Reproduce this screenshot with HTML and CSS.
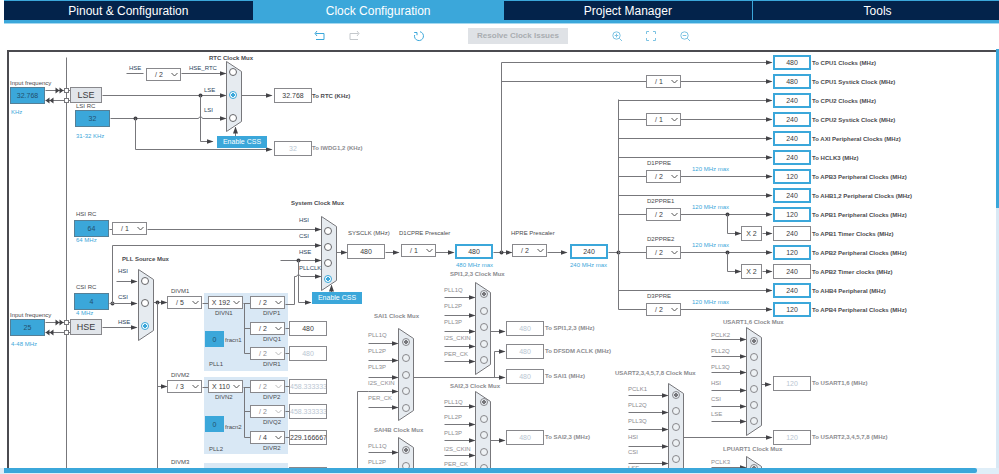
FILE: index.html
```html
<!DOCTYPE html>
<html lang="en">
<head>
<meta charset="utf-8">
<title>Clock Configuration</title>
<link rel="stylesheet" href="styles.css">
</head>
<body>
<nav class="tabs">
  <a class="tab" href="#pinout">Pinout &amp; Configuration</a>
  <a class="tab tab-active" href="#clock" aria-current="page">Clock Configuration</a>
  <a class="tab" href="#project">Project Manager</a>
  <a class="tab" href="#tools">Tools</a>
</nav>
<div class="toolbar">
  <div class="tool-group">
    <button class="tool" aria-label="Undo"><svg viewBox="0 0 12 12"><path d="M3 1 1 3.500 3 6M1.500 3.500H10V9.500H2"/></svg></button>
    <button class="tool" aria-label="Redo" disabled><svg viewBox="0 0 12 12"><path d="M9 1 11 3.500 9 6M10.500 3.500H2V9.500H10"/></svg></button>
  </div>
  <button class="tool" aria-label="Refresh"><svg viewBox="0 0 12 12"><path d="M7 1.700A4.500 4.500 0 1 1 1.600 5M1.200 2.500H4V5.200"/></svg></button>
  <button class="resolve" disabled>Resolve Clock Issues</button>
  <div class="tool-group">
    <button class="tool thin" aria-label="Zoom in"><svg viewBox="0 0 12 12"><circle cx="5.500" cy="5.500" r="3.700"/><path d="M8.300 8.300 11 11M3.700 5.500H7.300M5.500 3.700V7.300"/></svg></button>
    <button class="tool thin" aria-label="Fit"><svg viewBox="0 0 12 12"><path d="M1.500 4V1.500H4M8 1.500H10.500V4M10.500 8V10.500H8M4 10.500H1.500V8"/></svg></button>
    <button class="tool thin" aria-label="Zoom out"><svg viewBox="0 0 12 12"><circle cx="5.500" cy="5.500" r="3.700"/><path d="M8.300 8.300 11 11M3.700 5.500H7.300"/></svg></button>
  </div>
</div>
<main class="workspace">
  <div class="canvas" id="canvas">
    <svg class="wires" id="wires">
      <defs>
        <marker id="arrow" markerUnits="userSpaceOnUse" markerWidth="7" markerHeight="6" refX="6" refY="3" orient="auto"><path class="head" d="M0 0.500 7 3 0 5.500Z"/></marker>
      </defs>
    </svg>
  </div>
  <div class="vscroll"><div class="vthumb"></div></div>
</main>
<div class="hscroll"><div class="hthumb"></div></div>
<script src="script.js"></script>
</body>
</html>
```
FILE: styles.css
```css
* { box-sizing: border-box; }

body {
  margin: 0;
  height: 100vh;
  display: flex;
  flex-direction: column;
  overflow: hidden;
  background: #fff;
  color: #3c3c40;
  font: 6px/8px "Liberation Sans", Arial, sans-serif;
}

button, input, select {
  margin: 0;
  padding: 0;
  font: inherit;
  color: inherit;
  appearance: none;
  border-radius: 0;
}

/* Tab strip */
.tabs {
  display: grid;
  grid-template-columns: repeat(4, 1fr);
  gap: 1px;
  margin: 0 -3px 0 4px;
  padding: 1px 0 3px;
  background: #3ba7da;
  border-bottom: 1px solid #a5d8ef;
}
.tab {
  height: 19px;
  background: #03234b;
  color: #fff;
  font-size: 12px;
  line-height: 20px;
  text-align: center;
  text-decoration: none;
}
.tab-active { background: #3ba7da; }

/* Toolbar */
.toolbar {
  height: 25px;
  display: flex;
  align-items: center;
  justify-content: center;
  gap: 43px;
  padding: 0 0 2px 6px;
}
.tool-group { display: flex; gap: 22px; }
.toolbar > .tool { margin: 0 0 0 10px; }
.tool {
  width: 12px;
  height: 12px;
  border: 0;
  background: none;
  color: #3ba7da;
}
.tool:disabled { color: #c4c8cc; }
.tool svg { display: block; width: 12px; height: 12px; }
.tool path, .tool circle { fill: none; stroke: currentColor; stroke-width: 1; }
.thin { color: #7cc3e3; }
.resolve {
  width: 100px;
  height: 16px;
  border: 0;
  background: #dfe2e6;
  color: #a9adb1;
  font-size: 8px;
  font-weight: bold;
}

/* Diagram area */
.workspace { flex: 1; min-height: 0; display: flex; padding-left: 7px; }
.canvas {
  position: relative;
  flex: 1;
  margin-top: 1px;
  overflow: hidden;
  border: solid #4b4b50;
  border-width: 2px 0 0 2px;
}
.vscroll { width: 3px; background: #d9e9f5; }
.vthumb { height: 38%; background: #3ba7da; }
.hscroll { height: 6px; padding: 0 22px 1px 4px; background: #dfeef8; }
.hthumb { height: 5px; background: #3ba7da; border-radius: 0 2px 2px 0; }

.wires { position: absolute; left: 0; top: 0; width: 100%; height: 100%; }
.wire { fill: none; stroke: #77777b; }
.head, .dot { fill: #424246; }
.mux { fill: #e6ebf0; stroke: #77777b; }
.pin { fill: #fff; stroke: #77777b; }
.pll { fill: #d9e8f5; }

.node { position: absolute; }
.text { white-space: nowrap; color: #4a4a4e; }
.name { color: #2d4560; }
.strong { font-weight: bold; }
.dim { color: #8b8b8f; }
.blue { color: #3ba7da; }

.box {
  width: 38px;
  height: 15px;
  border: 1px solid #88888c;
  background: #fff;
  font-size: 7px;
  text-align: center;
}
.box:disabled { color: #b9c6d2; }
.limit { border: 2px solid #3ba7da; }
.source { width: 35px; height: 17px; background: #3ba7da; border-color: #557f96; color: #23506e; }
.fraction { width: 19px; height: 16px; background: #3ba7da; border-color: #3ba7da; color: #23506e; }
.times { width: 21px; }
.osc {
  width: 32px;
  height: 16px;
  border: 1px solid #88888c;
  background: #e1e5ea;
  font-size: 9px;
  line-height: 15px;
  text-align: center;
}
.css-button { width: 50px; height: 12px; border: 0; background: #3ba7da; color: #fff; font-size: 7px; }

.picker { width: 35px; height: 13px; }
.picker select {
  display: block;
  width: 100%;
  height: 100%;
  padding-right: 9px;
  border: 1px solid #88888c;
  background: #fff;
  font-size: 7px;
  text-align: center;
}
.picker svg { position: absolute; right: 3px; top: 4px; width: 7px; height: 5px; fill: none; stroke: #555; pointer-events: none; }
.picker-off select { color: #8b8b8f; opacity: 1; }
.picker-off svg { stroke: #bbb; }

.radio {
  width: 8px;
  height: 8px;
  border: 1px solid #66666a;
  border-radius: 50%;
  background: #fff;
}
.radio:checked {
  border-color: #3ba7da;
  background: radial-gradient(circle, #3ba7da 0 2px, #fff 2px);
}
.radio:disabled { border-color: #88888c; background: #edf1f4; }
.radio:disabled:checked { background: radial-gradient(circle, #77777b 0 2px, #e6ebf0 2px); }
```
FILE: script.js
```js
// Diagram coordinates of the canvas corner.
const LEFT = 9, TOP = 52;
const canvas = document.getElementById('canvas');
const NS = 'http://www.w3.org/2000/svg';
const layer = document.createElementNS(NS, 'g');
layer.setAttribute('transform', `translate(${0.5 - LEFT} ${0.5 - TOP})`);
document.getElementById('wires').append(layer);
let serial = 0;

function shape(tag, cls, attrs) {
  const el = document.createElementNS(NS, tag);
  el.setAttribute('class', cls);
  for (const k in attrs) el.setAttribute(k, attrs[k]);
  layer.append(el);
}
function node(tag, cls, x, y, props = {}) {
  const el = document.createElement(tag);
  el.className = 'node ' + cls;
  Object.assign(el, props);
  el.style.left = x - LEFT + 'px';
  el.style.top = y - TOP + 'px';
  canvas.append(el);
  return el;
}
const wire = d => shape('path', 'wire', { d });
const arrow = d => shape('path', 'wire', { d, 'marker-end': 'url(#arrow)' });
const dot = (cx, cy) => shape('circle', 'dot', { cx, cy, r: 2 });
const pll = (y, height) => shape('rect', 'pll', { x: 203.5, y: y - 0.5, width: 84, height });
// y is the middle of the line of text
const text = (cls, x, y, textContent, tag = 'span') => node(tag, 'text ' + cls, x, y - 4, { textContent });
function label(cls, x, y, caption, target) {
  text(cls, x, y, caption, 'label').htmlFor = target.id;
}
function box(cls, x, y, value, off = false) {
  return node('input', 'box ' + cls, x, y, { id: 'f' + serial++, value, disabled: off });
}
function picker(x, y, value, off = false) {
  const wrap = node('div', 'picker' + (off ? ' picker-off' : ''), x, y);
  const id = 's' + serial++;
  wrap.innerHTML = `<select id="${id}" aria-label="Factor"${off ? ' disabled' : ''}><option>${value}</option></select>` +
    '<svg viewBox="0 0 7 5"><path d="M0.500 1 3.500 4 6.500 1"/></svg>';
  return { id };
}
function mux(x, y1, y2, rx, radios, checked, off) {
  shape('path', 'mux', { d: `M${x} ${y1}L${x + 15} ${y1 + 10}V${y2 - 10}L${x} ${y2}Z` });
  const name = 'm' + serial++;
  radios.forEach((y, i) => node('input', 'radio', rx - 4, y - 4,
    { type: 'radio', name, checked: i === checked, disabled: off, ariaLabel: 'Source ' + (i + 1) }));
}
// Inputs of a mux: each has a name and an arrow below it
function inputs(x, end, names, nameYs, wireYs) {
  names.forEach((n, i) => {
    text('dim', x, nameYs[i], n);
    if (wireYs[i]) arrow(`M${x} ${wireYs[i]}H${end}`);
  });
}

pll(293, 78); pll(377, 77); pll(463, 60);
wire('M66 57V480');

// External oscillators
[[87, 'LSE', '32.768', 'KHz'], [319, 'HSE', '25', '4-48 MHz']].forEach(([y, name, value, unit]) => {
  const f = box('source', 10, y, value);
  label('', 10, y - 4, 'Input frequency', f);
  text('blue', 11, y + 25, unit);
  wire(`M45 ${y + 3}H64M45 ${y + 13}H64M68 ${y + 3}H70M68 ${y + 13}H70`);
  shape('path', 'head', { d: `M55 ${y}l4 3-4 3zM59 ${y}l4 3-4 3zM49 ${y + 10}l-4 3 4 3zM53 ${y + 10}l-4 3 4 3z` });
  [1, 11].forEach(d => shape('rect', 'pin', { x: 64, y: y + d, width: 4, height: 4 }));
  node('div', 'osc', 70, y, { textContent: name });
});

// Internal oscillators
[[75, 110, 106, 136, 'LSI RC', '32', '31-32 KHz'], [74, 220, 214, 240, 'HSI RC', '64', '64 MHz'],
 [74, 293, 287, 313, 'CSI RC', '4', '4 MHz']].forEach(([x, y, ly, uy, name, value, unit]) => {
  label('', 76, ly, name, box('source', x, y, value));
  text('blue', 76, uy, unit);
});

// RTC
text('name', 129, 68, 'HSE'); wire('M126 73H143'); picker(146, 68, '/ 2');
text('name', 189, 68, 'HSE_RTC'); arrow('M181 73H225');
text('name', 204, 90, 'LSE'); arrow('M102 95H225'); dot(200, 95);
text('name', 204, 110, 'LSI'); arrow('M110 118H198Q200 114 202 118H225'); dot(135, 118);
arrow('M200 95V141H212'); arrow('M135 118V149H271');
text('strong', 209, 58, 'RTC Clock Mux');
mux(226, 61, 131, 233, [72, 95, 118], 1, false);
arrow('M241 95H271'); arrow('M235 136V127');
label('strong', 312, 96, 'To RTC (KHz)', box('', 274, 88, '32.768'));
label('strong dim', 312, 148, 'To IWDG1,2 (KHz)', box('', 274, 141, '32', true));
node('button', 'css-button', 217, 136, { textContent: 'Enable CSS' });

// PLL source
wire('M109 229H112'); picker(112, 222, '/ 1'); arrow('M147 229H320');
dot(112, 303); arrow('M109 303H136'); arrow('M112 303V245H320');
text('strong', 122, 259, 'PLL Source Mux');
text('name', 118, 271, 'HSI'); arrow('M116 281H136');
text('name', 118, 297, 'CSI');
text('name', 118, 322, 'HSE'); arrow('M102 327H136');
mux(138, 269, 340, 145, [281, 303, 326], 2, false);
arrow('M153 302H166'); dot(157, 302); wire('M157 302V480'); arrow('M157 386H166');

// PLL1 and PLL2
[[296, '/ 5', 'X 192', 1, [[296, '/ 2', false], [322, '/ 2', false, '480', false], [347, '/ 2', true, '480', true]], 331, 340, 364],
 [380, '/ 3', 'X 110', 2, [[380, '/ 2', true, '458.333333', true], [405, '/ 2', true, '458.333333', true], [431, '/ 4', false, '229.166667', false]], 416, 427, 449]
].forEach(([y, m, n, id, outs, fy, fly, py]) => {
  label('', 171, y - 5, 'DIVM' + id, picker(167, y, m));
  wire(`M202 ${y + 7}H208M243 ${y + 7}H250M244 ${y + 7}V${outs[2][0] + 6}`);
  label('', 215, y + 17, 'DIVN' + id, picker(208, y, n));
  outs.forEach(([oy, div, off, value, dead], i) => {
    if (i) wire(`M244 ${oy + 6}H250`);
    if (value) wire(`M285 ${oy + 6}H289`);
    label('', 263, oy + 17, 'DIV' + 'PQR'[i] + id, picker(250, oy, div, off));
    if (value) box('', 289, oy - 1, value, dead);
  });
  label('', 225, fly, 'fracn' + id, box('fraction', 205, fy, '0'));
  text('', 209, py, 'PLL' + id);
});
text('', 171, 462, 'DIVM3');
box('', 289, 467, '');

// System clock
text('strong', 291, 203, 'System Clock Mux');
['HSI', 'CSI', 'HSE', 'PLLCLK'].forEach((n, i) => text('name', 299, 220 + 16 * i, n));
arrow('M280 260H320'); dot(298, 260); arrow('M298 260V302H310');
arrow('M285 304H294V276H296Q298 272 300 276H320');
mux(321, 216, 290, 328, [231, 247, 263, 279], 3, false);
arrow('M331 292V285');
node('button', 'css-button', 312, 292, { textContent: 'Enable CSS' });
arrow('M336 252H346'); label('', 348, 233, 'SYSCLK (MHz)', box('', 347, 244, '480'));
arrow('M385 252H398'); label('', 399, 233, 'D1CPRE Prescaler', picker(401, 244, '/ 1'));
arrow('M435 252H453'); box('limit', 455, 244, '480'); text('blue', 456, 265, '480 MHz max');
arrow('M493 252H511'); dot(501, 252); label('', 511, 233, 'HPRE Prescaler', picker(512, 244, '/ 2'));
arrow('M547 252H566'); box('limit', 570, 244, '240'); text('blue', 570, 265, '240 MHz max');
wire('M608 252H646'); dot(618, 252);
wire('M501 252V62'); wire('M618 99V309');

// Bus outputs, one row each: name, value, start of the wire (0 = fed by a multiplier)
[['CPU1 Clocks', 480, 501], ['CPU1 Systick Clock', 480, 501, '/ 1'], ['CPU2 Clocks', 240, 618],
 ['CPU2 Systick Clock', 240, 618, '/ 1'], ['AXI Peripheral Clocks', 240, 618], ['HCLK3', 240, 618],
 ['APB3 Peripheral Clocks', 120, 618, '/ 2', 'D1PPRE'], ['AHB1,2 Peripheral Clocks', 240, 618],
 ['APB1 Peripheral Clocks', 120, 618, '/ 2', 'D2PPRE1'], ['APB1 Timer Clocks', 240, 0],
 ['APB2 Peripheral Clocks', 120, 618, '/ 2', 'D2PPRE2'], ['APB2 Timer clocks', 240, 0],
 ['AHB4 Peripheral', 240, 618], ['APB4 Peripheral Clocks', 120, 618, '/ 2', 'D3PPRE']
].forEach(([name, value, from, div, divName], i) => {
  const y = 62 + 19 * i;
  if (from) arrow(`M${from} ${y}H771`);
  else {
    dot(727, y - 19);
    arrow(`M727 ${y - 19}V${y}H740`);
    box('times', 741, y - 7, 'X 2').readOnly = true;
    arrow(`M762 ${y}H771`);
  }
  if (div) {
    const p = picker(646, y - 6, div);
    if (divName) {
      label('', 647, y - 13, divName, p);
      text('blue', 692, y - 7, '120 MHz max');
    }
  }
  label('strong', 812, y + 1, `To ${name} (MHz)`, box(from ? 'limit' : '', 773, y - 7, value));
});

// Peripheral muxes
const AUDIO = ['PLL1Q', 'PLL2P', 'PLL3P', 'I2S_CKIN', 'PER_CK'];
text('strong dim', 450, 274, 'SPI1,2,3 Clock Mux');
inputs(444, 474, AUDIO, [290, 306, 322, 338, 354], [297, 315, 331, 346, 361]);
mux(475, 282, 374, 484, [294, 311, 327, 344, 360], 0, true);
arrow('M490 331H504');
text('strong dim', 374, 316, 'SAI1 Clock Mux');
inputs(368, 397, AUDIO, [335, 351, 367, 383, 398], [343, 360, 377, 391, 407]);
mux(398, 328, 420, 406, [342, 358, 375, 391, 408], 0, true);
wire('M368 391H357V480'); arrow('M413 377H504'); arrow('M494 377V351H504');
text('strong dim', 450, 386, 'SAI2,3 Clock Mux');
inputs(444, 474, AUDIO, [402, 417, 433, 449, 464], [406, 424, 440, 455]);
mux(475, 391, 483, 484, [402, 419, 435, 452, 468], 0, true);
arrow('M490 440H504');
text('strong dim', 374, 430, 'SAI4B Clock Mux');
inputs(368, 397, AUDIO.slice(0, 2), [446, 462], [452]);
mux(398, 437, 529, 406, [450, 466], 0, true);

text('strong dim', 723, 322, 'USART1,6 Clock Mux');
inputs(711, 745, ['PCLK2', 'PLL2Q', 'PLL3Q', 'HSI', 'CSI', 'LSE'], [335, 351, 367, 383, 399, 414], [339, 356, 372, 390, 406, 421]);
mux(746, 327, 435, 754, [341, 357, 373, 389, 405, 421], 0, true);
arrow('M761 384H770');
text('strong dim', 615, 373, 'USART2,3,4,5,7,8 Clock Mux');
inputs(628, 667, ['PCLK1', 'PLL2Q', 'PLL3Q', 'HSI', 'CSI', 'LSE'], [389, 405, 421, 437, 452, 468], [395, 412, 429, 446, 463]);
mux(668, 383, 491, 676, [395, 411, 427, 443, 459], 0, true);
arrow('M683 437H771');
text('strong dim', 723, 449, 'LPUART1 Clock Mux');
inputs(711, 745, ['PCLK3'], [462], [467]);
mux(746, 456, 560, 754, [468], 0, true);

[[506, 321, 480, 'SPI1,2,3'], [506, 344, 480, 'DFSDM ACLK'], [506, 369, 480, 'SAI1'], [506, 430, 480, 'SAI2,3'],
 [773, 376, 120, 'USART1,6'], [773, 430, 120, 'USART2,3,4,5,7,8']].forEach(([x, y, value, name]) =>
  label('strong dim', x + 39, y + 7, `To ${name} (MHz)`, box('', x, y, value, true)));
```
